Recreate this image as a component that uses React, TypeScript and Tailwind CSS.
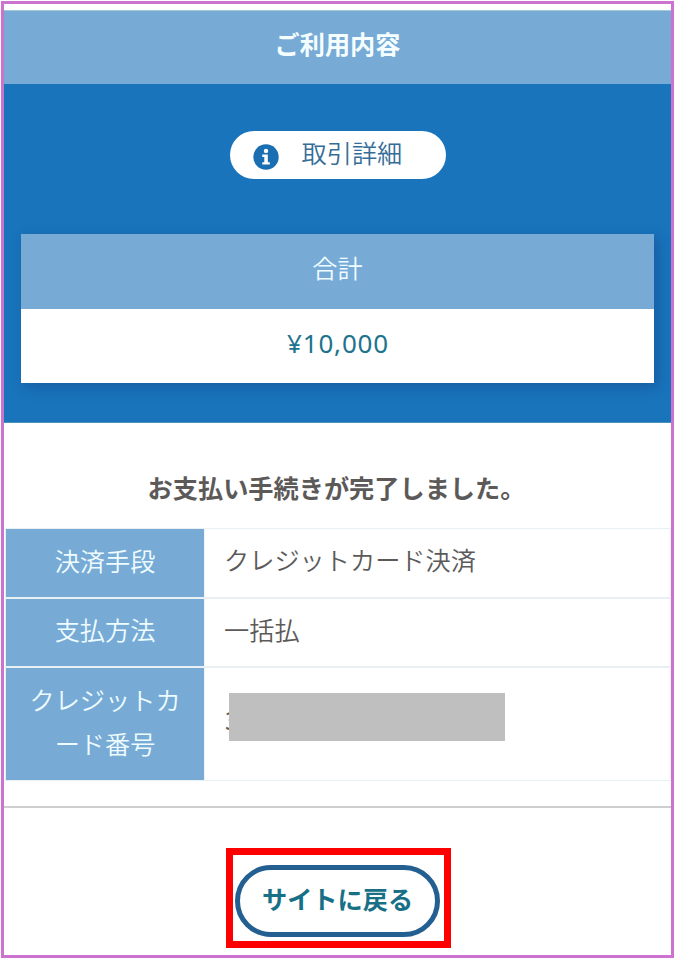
import React from 'react';

const TEXT = "font-['Noto_Sans_CJK_JP',sans-serif] text-[25.2px] font-[350]";

function InfoIcon() {
  return (
    <svg width="26" height="26" viewBox="0 0 26 26" aria-hidden="true">
      <circle cx="13" cy="13" r="12.7" fill="#1a6fb3" />
      <circle cx="13" cy="6.9" r="2.2" fill="#fff" />
      <path d="M9.3 10.6h5.5v7.6h2v2.3H9.3v-2.3h2v-5.3h-2z" fill="#fff" />
    </svg>
  );
}

function Row({ label, height, last, children }: { label: React.ReactNode; height: string; last?: boolean; children: React.ReactNode }) {
  return (
    <div className={`flex ${height} border-[#e9f0f3] ${last ? 'border-b' : 'border-b-2'}`}>
      <div className="flex w-[198px] shrink-0 flex-col items-center justify-center bg-[#77abd6] pb-[7px] text-center leading-[44px] text-[#effcff]">
        <span>{label}</span>
      </div>
      <div className="flex flex-1 items-center border-l border-[#edf5f8] pb-[6px] pl-[19px] text-[#5c5a59]">{children}</div>
    </div>
  );
}

export default function App() {
  return (
    <div className={`h-[959px] w-[675px] bg-[#fdfbfe] p-px ${TEXT}`}>
      <div className="flex h-[957px] w-[673px] flex-col border-[3px] border-[#cc73cf] bg-white pt-[6px]">
        <header className="flex h-[74px] shrink-0 justify-center border-t border-[#a3c8d8] bg-[#77abd6] pt-[14px] font-bold leading-[36px] text-[#f5feff]">
          ご利用内容
        </header>
        <section className="flex h-[339px] shrink-0 flex-col items-center border-b border-[#4c8fb8] bg-[#1974bb] pt-[47px]">
          <button className="flex h-[48px] w-[216px] items-center rounded-full bg-white pl-[22px] text-[#356d98]">
            <span className="mt-[3px] ml-px"><InfoIcon /></span>
            <span className="ml-[23px] pb-[7px] leading-[36px]">取引詳細</span>
          </button>
          <div className="mt-[55px] h-[149px] w-[633px] text-center shadow-[4px_4px_12px_rgba(20,50,120,0.35)]">
            <div className="h-[75px] bg-[#77abd6] pt-[15px] leading-[36px] text-[#effcff]">合計</div>
            <div className="h-[74px] bg-white pt-[16px] pl-px font-['Noto_Sans',sans-serif] text-[26px] font-normal leading-[36px] tracking-[0.8px] text-[#20738d]">¥10,000</div>
          </div>
        </section>
        <h1 className="mt-[46px] shrink-0 pr-[2px] text-center text-[25.2px] font-bold leading-[36px] text-[#5c5a59]">
          お支払い手続きが完了しました。
        </h1>
        <div className="mt-[23px] ml-px shrink-0 border border-b-0 border-[#e9f0f3]">
          <Row label="決済手段" height="h-[70px]">クレジットカード決済</Row>
          <Row label="支払方法" height="h-[69px]">一括払</Row>
          <Row label={<>クレジットカ<br />ード番号</>} height="h-[113px]" last>
            <span className="relative flex h-[48px] w-[281px] items-center pb-[4px]">
              <span className="pt-[4px] pl-px font-['Noto_Sans',sans-serif] font-normal">3</span>
              <span className="absolute top-[-4px] left-[5px] h-[48px] w-[276px] bg-[#bfbfbf]" />
            </span>
          </Row>
        </div>
        <hr className="mt-[25px] shrink-0 border-t-2 border-[#cfcfcf]" />
        <div className="mt-[40px] ml-[222px] flex h-[100px] w-[225px] shrink-0 border-[7px] border-[#ff0000] pt-[10px] pl-[2px]">
          <button className="h-[72px] w-[205px] shrink-0 rounded-full border-[5px] border-[#235f91] pb-[6px] font-bold leading-[36px] text-[#177086]">サイトに戻る</button>
        </div>
      </div>
    </div>
  );
}
